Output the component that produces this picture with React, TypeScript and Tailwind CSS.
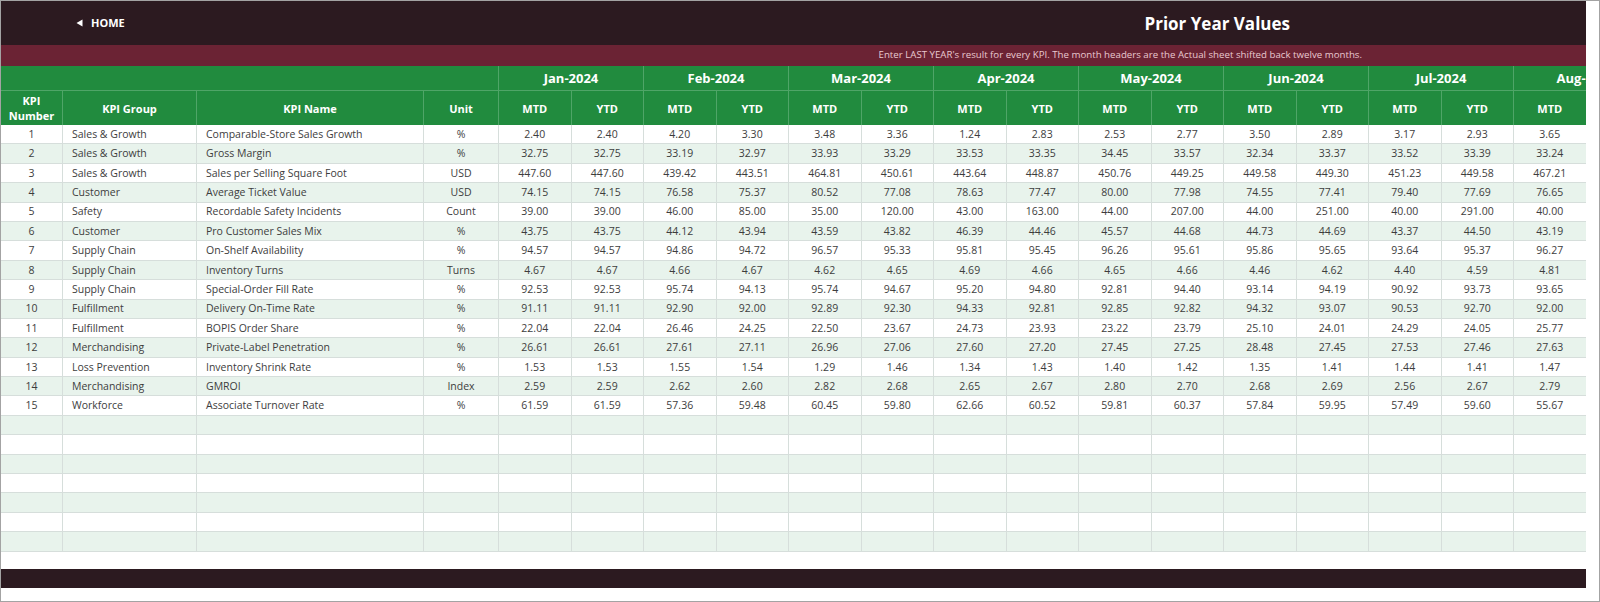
import React from "react";

type Row = { n: number; group: string; name: string; unit: string; v: number[] };

const months = ["Jan-2024", "Feb-2024", "Mar-2024", "Apr-2024", "May-2024", "Jun-2024", "Jul-2024", "Aug-2024"];

const rows: Row[] = [
  { n: 1, group: "Sales & Growth", name: "Comparable-Store Sales Growth", unit: "%", v: [2.4, 2.4, 4.2, 3.3, 3.48, 3.36, 1.24, 2.83, 2.53, 2.77, 3.5, 2.89, 3.17, 2.93, 3.65] },
  { n: 2, group: "Sales & Growth", name: "Gross Margin", unit: "%", v: [32.75, 32.75, 33.19, 32.97, 33.93, 33.29, 33.53, 33.35, 34.45, 33.57, 32.34, 33.37, 33.52, 33.39, 33.24] },
  { n: 3, group: "Sales & Growth", name: "Sales per Selling Square Foot", unit: "USD", v: [447.6, 447.6, 439.42, 443.51, 464.81, 450.61, 443.64, 448.87, 450.76, 449.25, 449.58, 449.3, 451.23, 449.58, 467.21] },
  { n: 4, group: "Customer", name: "Average Ticket Value", unit: "USD", v: [74.15, 74.15, 76.58, 75.37, 80.52, 77.08, 78.63, 77.47, 80.0, 77.98, 74.55, 77.41, 79.4, 77.69, 76.65] },
  { n: 5, group: "Safety", name: "Recordable Safety Incidents", unit: "Count", v: [39, 39, 46, 85, 35, 120, 43, 163, 44, 207, 44, 251, 40, 291, 40] },
  { n: 6, group: "Customer", name: "Pro Customer Sales Mix", unit: "%", v: [43.75, 43.75, 44.12, 43.94, 43.59, 43.82, 46.39, 44.46, 45.57, 44.68, 44.73, 44.69, 43.37, 44.5, 43.19] },
  { n: 7, group: "Supply Chain", name: "On-Shelf Availability", unit: "%", v: [94.57, 94.57, 94.86, 94.72, 96.57, 95.33, 95.81, 95.45, 96.26, 95.61, 95.86, 95.65, 93.64, 95.37, 96.27] },
  { n: 8, group: "Supply Chain", name: "Inventory Turns", unit: "Turns", v: [4.67, 4.67, 4.66, 4.67, 4.62, 4.65, 4.69, 4.66, 4.65, 4.66, 4.46, 4.62, 4.4, 4.59, 4.81] },
  { n: 9, group: "Supply Chain", name: "Special-Order Fill Rate", unit: "%", v: [92.53, 92.53, 95.74, 94.13, 95.74, 94.67, 95.2, 94.8, 92.81, 94.4, 93.14, 94.19, 90.92, 93.73, 93.65] },
  { n: 10, group: "Fulfillment", name: "Delivery On-Time Rate", unit: "%", v: [91.11, 91.11, 92.9, 92.0, 92.89, 92.3, 94.33, 92.81, 92.85, 92.82, 94.32, 93.07, 90.53, 92.7, 92.0] },
  { n: 11, group: "Fulfillment", name: "BOPIS Order Share", unit: "%", v: [22.04, 22.04, 26.46, 24.25, 22.5, 23.67, 24.73, 23.93, 23.22, 23.79, 25.1, 24.01, 24.29, 24.05, 25.77] },
  { n: 12, group: "Merchandising", name: "Private-Label Penetration", unit: "%", v: [26.61, 26.61, 27.61, 27.11, 26.96, 27.06, 27.6, 27.2, 27.45, 27.25, 28.48, 27.45, 27.53, 27.46, 27.63] },
  { n: 13, group: "Loss Prevention", name: "Inventory Shrink Rate", unit: "%", v: [1.53, 1.53, 1.55, 1.54, 1.29, 1.46, 1.34, 1.43, 1.4, 1.42, 1.35, 1.41, 1.44, 1.41, 1.47] },
  { n: 14, group: "Merchandising", name: "GMROI", unit: "Index", v: [2.59, 2.59, 2.62, 2.6, 2.82, 2.68, 2.65, 2.67, 2.8, 2.7, 2.68, 2.69, 2.56, 2.67, 2.79] },
  { n: 15, group: "Workforce", name: "Associate Turnover Rate", unit: "%", v: [61.59, 61.59, 57.36, 59.48, 60.45, 59.8, 62.66, 60.52, 59.81, 60.37, 57.84, 59.95, 57.49, 59.6, 55.67] },
];

const EMPTY_ROWS = 7;
const SUB_COLS = 15;

function Cell({ w, children, align = "center" }: { w: string; children?: React.ReactNode; align?: "center" | "left" }) {
  return (
    <div
      className={`${w} shrink-0 h-full border-r border-b border-[#d6dedb] flex items-center pt-[1px] ${
        align === "left" ? "justify-start pl-[9px]" : "justify-center"
      } whitespace-nowrap overflow-hidden`}
    >
      {children}
    </div>
  );
}

export default function App() {
  const allRows: (Row | null)[] = [...rows, ...Array.from({ length: EMPTY_ROWS }, () => null)];
  return (
    <div
      className="w-[1600px] h-[602px] border border-[#a3a3a3] bg-white overflow-hidden"
      style={{ fontFamily: '"Open Sans", "Noto Sans", Arial, sans-serif' }}
    >
      <div className="w-[1585px] flex flex-col">
        {/* Header */}
        <div className="h-[44px] bg-[#2c1a20] flex items-center justify-between pl-[75px] pr-[296px]">
          <div className="flex items-center gap-[8px] text-white text-[11px] font-bold">
            <svg width="7" height="8" viewBox="0 0 7 8" className="block">
              <path d="M6.5 0.5 L0.5 4 L6.5 7.5 Z" fill="#ffffff" />
            </svg>
            <span>HOME</span>
          </div>
          <div className="text-white text-[17px] font-bold pt-[2px]">Prior Year Values</div>
        </div>
        {/* Band */}
        <div className="h-[21px] bg-[#6b2334] flex items-center justify-end pr-[224px]">
          <span className="text-[9.7px] text-[#e9c9d0]">
            Enter LAST YEAR's result for every KPI. The month headers are the Actual sheet shifted back twelve months.
          </span>
        </div>
        {/* Table (horizontally clipped, like a scrolled sheet) */}
        <div className="w-[1585px] overflow-hidden">
          <div className="w-[1660px]">
            {/* Month header row */}
            <div className="h-[25px] flex bg-[#218b3e] text-white font-bold text-[13px]">
              <div className="w-[498px] shrink-0 h-full border-r border-b border-[#4fa567]" />
              {months.map((m) => (
                <div key={m} className="w-[145px] shrink-0 h-full border-r border-b border-[#4fa567] flex items-center justify-center pt-[2px]">
                  {m}
                </div>
              ))}
            </div>
            {/* Sub header row */}
            <div className="h-[34px] flex bg-[#218b3e] text-white font-bold text-[11px] leading-[15px]">
              <div className="w-[62px] shrink-0 h-full border-r border-[#4fa567] flex items-center justify-center text-center">
                KPI
                <br />
                Number
              </div>
              <div className="w-[134px] shrink-0 h-full border-r border-[#4fa567] flex items-center justify-center">KPI Group</div>
              <div className="w-[227px] shrink-0 h-full border-r border-[#4fa567] flex items-center justify-center">KPI Name</div>
              <div className="w-[75px] shrink-0 h-full border-r border-[#4fa567] flex items-center justify-center">Unit</div>
              {Array.from({ length: SUB_COLS }, (_, j) => (
                <div key={j} className="w-[72.5px] shrink-0 h-full border-r border-[#4fa567] flex items-center justify-center">
                  {j % 2 === 0 ? "MTD" : "YTD"}
                </div>
              ))}
            </div>
            {/* Data rows */}
            {allRows.map((r, i) => (
              <div
                key={i}
                className={`h-[19.4px] flex text-[10.5px] text-[#3d3d3d] ${i % 2 === 1 ? "bg-[#e8f3ec]" : "bg-white"}`}
              >
                <Cell w="w-[62px]">{r ? r.n : ""}</Cell>
                <Cell w="w-[134px]" align="left">{r ? r.group : ""}</Cell>
                <Cell w="w-[227px]" align="left">{r ? r.name : ""}</Cell>
                <Cell w="w-[75px]">{r ? r.unit : ""}</Cell>
                {Array.from({ length: SUB_COLS }, (_, j) => (
                  <Cell key={j} w="w-[72.5px]">{r ? r.v[j].toFixed(2) : ""}</Cell>
                ))}
              </div>
            ))}
          </div>
        </div>
        {/* Spacer + footer */}
        <div className="h-[17px]" />
        <div className="h-[19px] bg-[#2c1a20]" />
        <div className="h-[13px]" />
      </div>
    </div>
  );
}
